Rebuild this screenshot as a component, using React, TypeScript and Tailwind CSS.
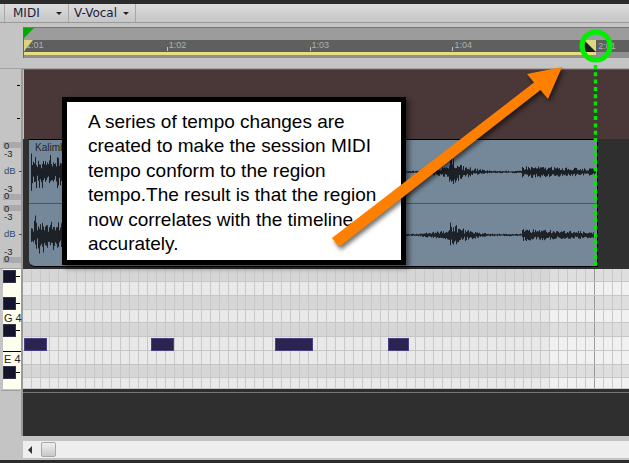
import React from 'react';

const COLUMNS = Array.from({ length: 68 }, (_, i) => i);
const PIANO_ROWS = [
  { h: 'h-[13px]', dark: true },
  { h: 'h-[14px]', dark: false },
  { h: 'h-[14px]', dark: true },
  { h: 'h-[13px]', dark: false },
  { h: 'h-[14px]', dark: true },
  { h: 'h-[14px]', dark: false },
  { h: 'h-[14px]', dark: false },
  { h: 'h-[13px]', dark: true },
  { h: 'h-[11px]', dark: false },
];
const NOTES = [
  { left: 'left-[1px]', w: 'w-[23px]' },
  { left: 'left-[128px]', w: 'w-[23px]' },
  { left: 'left-[252px]', w: 'w-[38px]' },
  { left: 'left-[365px]', w: 'w-[21px]' },
];

// rough envelope of the kalimba hits, x is page x
const envelope = (x: number) => {
  let a = 1.2;
  if (x < 70) a = (19 - (x - 30) * 0.12) * (0.4 + 0.6 * Math.abs(Math.sin(x * 0.85)));
  if (x >= 420 && x < 449) a = 1.5 + (x - 420) * 0.12;
  if (x >= 449) a = Math.max(a, 15 * Math.exp(-(x - 449) / 18) * (0.6 + 0.4 * Math.abs(Math.sin(x * 1.3))));
  if (x >= 522) a = Math.max(a, 6 * Math.exp(-(x - 522) / 120));
  return a;
};

const wavePath = (seed: number) => {
  let s = seed;
  const rnd = () => {
    s = (s * 9301 + 49297) % 233280;
    return s / 233280;
  };
  let d = '';
  for (let i = 0; i < 568; i++) {
    const x = i + 29;
    if (x < 31 || x > 595) continue;
    const a = envelope(x);
    const up = a * (0.35 + rnd() * 0.75);
    const down = a * (0.35 + rnd() * 0.75);
    d += `M${i + 0.5} ${32 - up}V${32 + down}`;
  }
  return d;
};

const Waveform = ({ seed, h }: { seed: number; h: string }) => (
  <svg className={`block w-[568px] ${h}`} viewBox="0 0 568 63" preserveAspectRatio="none">
    <path d={wavePath(seed)} stroke="#1b2026" strokeWidth="1" fill="none" />
  </svg>
);

const Meter = () => (
  <div className="flex flex-col items-start pl-[3px] text-[9.5px] leading-none text-[#222] h-[58px]">
    <div className="w-[18px] h-[6px] bg-[#a9a9ae] leading-[8px] pl-[1px]">0</div>
    <div className="h-[17px] pt-[1px] pl-[1px]">-3</div>
    <div className="h-[17px] pt-[1px] pl-[1px] flex gap-[3px] text-[#2f4a6a]">
      dB<span className="text-black">-</span>
    </div>
    <div className="h-[12px] pt-[2px] pl-[1px]">-3</div>
    <div className="w-[18px] h-[6px] bg-[#a9a9ae] leading-[4px] pl-[1px]">0</div>
  </div>
);

const BlackKey = ({ mt }: { mt: string }) => (
  <div className={`flex items-center ${mt}`}>
    <div className="w-[13px] h-[13px] bg-[#14142c] border border-[#33334a]" />
    <div className="w-[4px] h-px bg-black" />
  </div>
);

const MenuButton = ({ label, w }: { label: string; w: string }) => (
  <div className={`flex items-center justify-between h-full border-r border-[#a8a8a8] ${w}`}>
    <span>{label}</span>
    <span className="mr-[6px] w-0 h-0 border-x-[3px] border-x-transparent border-t-[3px] border-t-[#222]" />
  </div>
);

const RulerMark = ({ label }: { label: string }) => (
  <div className="w-[142.8px] shrink-0 h-full flex items-end">
    <div className="w-px h-[4px] bg-[#c0c0c0] mb-[1px]" />
    <span className="pl-[1px] pb-[2px] text-[9px] leading-none text-[#b0b0b0]">{label}</span>
  </div>
);

export default function App() {
  return (
    <div className="relative w-[629px] h-[463px] overflow-hidden flex flex-col bg-[#c4c4c4] font-['Liberation_Sans',sans-serif]">
      <div className="h-[4px] bg-[#2b2b2b]" />

      {/* toolbar */}
      <div className="h-[19px] flex pl-[4px] bg-gradient-to-b from-[#dcdcdc] to-[#c6c6c6] border-b border-[#999] font-['DejaVu_Sans',sans-serif] text-[12px] text-[#1c1c3a]">
        <div className="pl-[8px] flex border-l border-[#a8a8a8]">
          <MenuButton label="MIDI" w="w-[56px]" />
          <div className="pl-[5px]">
            <MenuButton label="V-Vocal" w="w-[62px]" />
          </div>
        </div>
      </div>

      {/* timeline */}
      <div className="h-[46px] pt-[4px] pl-[23px] border-b border-[#a4a4a4]">
        <div className="relative border-l border-[#a040a0]">
          <div className="h-[13px] bg-[#9c9c9c] border-t border-[#777]">
            <div className="w-0 h-0 border-r-[10px] border-r-transparent border-t-[10px] border-t-[#00a800]" />
          </div>
          <div className="relative h-[12px] bg-[#5f5f5f] flex overflow-hidden">
            <div className="absolute left-0 top-0 w-0 h-0 border-r-[9px] border-r-transparent border-t-[11px] border-t-[#d8d480]" />
            <RulerMark label="1:01" />
            <RulerMark label="1:02" />
            <RulerMark label="1:03" />
            <RulerMark label="1:04" />
            <span className="pl-[3px] pt-[2px] text-[9px] text-[#b0b0b0] leading-none">2:01</span>
            <svg className="absolute left-[561px] top-0 w-[11px] h-[13px]" viewBox="0 0 11 13">
              <rect width="11" height="13" fill="#dcd880" />
              <path d="M0 1L11 12H0Z" fill="#1c1c1c" />
            </svg>
          </div>
          <div className="h-[3px] bg-[#8f8f8f]">
            <div className="w-[572px] h-full bg-[#e4e080]" />
          </div>
          <div className="h-[3px] bg-[#8f8f8f]" />
        </div>
      </div>

      <div className="flex-1 flex">
        {/* left gutter */}
        <div className="w-[23px] shrink-0 flex flex-col border-r-2 border-[#9a9a9a]">
          <div className="h-[73px] relative">
            <div className="absolute left-[17px] top-[16px] w-[3px] h-px bg-black" />
            <div className="absolute left-[17px] top-[49px] w-[3px] h-px bg-black" />
          </div>
          <Meter />
          <div className="h-[5px]" />
          <Meter />
          <div className="h-[6px] border-b border-[#a0a0a0]" />
          <div className="ml-[3px] w-[18px] h-[120px] bg-[#fffff0] text-[11px] text-[#222] leading-none whitespace-nowrap">
            <BlackKey mt="mt-[1px]" />
            <BlackKey mt="mt-[14px]" />
            <div className="h-[14px] pt-[3px] pl-[1px]">G 4</div>
            <BlackKey mt="" />
            <div className="h-[14px]" />
            <div className="h-[15px] border-t border-black pt-[2px] pl-[1px]">E 4</div>
            <BlackKey mt="" />
          </div>
          <div className="mt-[1px] h-px bg-[#a0a0a0] mx-[1px]" />
        </div>

        {/* tracks */}
        <div className="flex-1 min-w-0 flex flex-col">
          <div className="h-[70px] bg-[#4a3737] border-t border-l border-t-[#6a5858] border-l-[#8fd8d8]" />
          <div className="h-[128px] bg-[#2f2f2f] pl-[6px] flex items-stretch">
            <div className="relative w-[569px] shrink-0 bg-[#758899] border-y border-r border-black rounded-bl-[6px] flex flex-col">
              <span className="absolute left-[6px] top-[3px] text-[10px] leading-none text-[#20262c]">Kalimba</span>
              <Waveform seed={17} h="h-[63px]" />
              <div className="h-px bg-[#49555f]" />
              <Waveform seed={71} h="h-[61px]" />
            </div>
          </div>
          <div className="h-[2px] bg-[#2f2f2f]" />

          {/* piano roll */}
          <div className="relative h-[120px] bg-[#cfcfcf] flex flex-col overflow-hidden">
            {PIANO_ROWS.map((row, r) => (
              <div key={r} className={`flex shrink-0 border-b border-[#c6c6c6] ${row.h}`}>
                {COLUMNS.map((c) => (
                  <div
                    key={c}
                    className={`w-[8.94px] shrink-0 border-r ${c === 63 ? 'border-[#999]' : 'border-[#c8c8c8]'} ${
                      row.dark
                        ? c >= 59 ? 'bg-[#dedede]' : 'bg-[#d6d6d6]'
                        : c >= 59 ? 'bg-[#f1f1f1]' : 'bg-[#e9e9e9]'
                    }`}
                  />
                ))}
              </div>
            ))}
            {NOTES.map((n, i) => (
              <div
                key={i}
                className={`absolute top-[69px] h-[13px] bg-[#2b2350] border border-[#4b4084] ${n.left} ${n.w}`}
              />
            ))}
          </div>

          <div className="flex-1 bg-[#2f2f2f] pt-[3px]">
            <div className="h-px bg-[#777]" />
          </div>
        </div>
      </div>

      {/* scrollbar */}
      <div className="h-[24px] bg-[#c4c4c4] pt-[5px] pl-[23px]">
        <div className="h-[17px] bg-[#eeeeee] flex items-center pl-[5px]">
          <span className="w-0 h-0 border-y-[4px] border-y-transparent border-r-[4px] border-r-[#333]" />
          <div className="ml-[9px] w-[15px] h-[15px] rounded-[2px] border border-[#a8a8a8] bg-gradient-to-b from-[#f0f0f0] to-[#c8c8c8]" />
        </div>
      </div>
      <div className="h-[3px] bg-[#2b2b2b]" />

      {/* callout and annotations */}
      <div className="absolute left-[62px] top-[97px] w-[344px] h-[168px] bg-white border-[5px] border-black shadow-[3px_3px_5px_rgba(0,0,0,0.5)] pl-[21px] pt-[8px] text-[19px] leading-[24.4px] text-black whitespace-nowrap">
        <p>A series of tempo changes are</p>
        <p>created to make the session MIDI</p>
        <p>tempo conform to the region</p>
        <p>tempo.The result is that the region</p>
        <p>now correlates with the timeline</p>
        <p>accurately.</p>
      </div>
      <svg className="absolute left-0 top-0 w-[629px] h-[463px] pointer-events-none" viewBox="0 0 629 463">
        <polygon
          points="332,238 534,82.5 527,74 562,67 548,99 540.5,90 339,247"
          fill="#ff8000"
          className="drop-shadow-[2px_3px_2px_rgba(0,0,0,0.55)]"
        />
        <line x1="595.5" y1="65" x2="595.5" y2="265" stroke="#00e800" strokeWidth="3.5" strokeDasharray="4 3.3" />
        <circle cx="596" cy="46" r="14" fill="none" stroke="#00ee00" strokeWidth="5" />
      </svg>
    </div>
  );
}
